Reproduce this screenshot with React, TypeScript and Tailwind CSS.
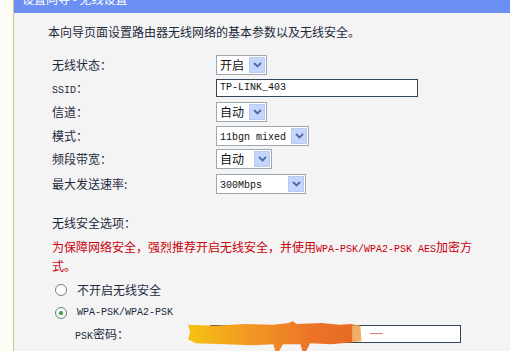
import React from 'react';

const cjk = { fontFamily: '"Noto Sans CJK SC", "Liberation Sans", sans-serif' };
const mono = 'font-["Liberation_Mono","Noto_Sans_CJK_SC",monospace] text-[10px] leading-none';

const Arrow = () => (
    <span className="ml-auto mr-[1px] flex h-[16px] w-[16px] items-center justify-center border border-[#b9c9ef] bg-[#c6d5fb]">
        <svg width="9" height="6" viewBox="0 0 9 6" fill="none">
            <path d="M1 1L4.5 4.5L8 1" stroke="#4b6ca8" strokeWidth="1.8" />
        </svg>
    </span>
);

const Select = ({ w, children }: { w: string; children: React.ReactNode }) => (
    <div className={`flex h-[20px] items-center border border-[#9ea6ae] bg-white pl-[3px] ${w}`}>
        <span className="text-[12px] leading-none text-[#111]">{children}</span>
        <Arrow />
    </div>
);

const Row = ({ label, h, children }: { label: React.ReactNode; h: string; children: React.ReactNode }) => (
    <div className={`flex items-center ${h}`}>
        <div className="w-[168px] pl-[4px] text-[12px] text-[#1c2a3c]">{label}</div>
        {children}
    </div>
);

export default function App() {
    return (
        <div className="flex h-[351px] w-[510px] overflow-hidden bg-[#fdfdf8]" style={cjk}>
            <div className="w-[13px] shrink-0" />
            <div className="relative flex flex-1 flex-col border-l border-[#d8bf8e] bg-[#f4f4f4]">
                <div className="h-[13px] shrink-0 overflow-hidden bg-[#6c8ff3] pl-[8px]">
                    <div className="-mt-[9px] text-[12px] leading-[16px] text-white">设置向导 - 无线设置</div>
                </div>

                <div className="pl-[34px]">
                    <div className="mt-[11px] h-[16px] text-[12px] leading-[16px] text-[#1c2a3c]">
                        本向导页面设置路由器无线网络的基本参数以及无线安全。
                    </div>

                    <div className="mt-[13px]">
                        <Row label="无线状态：" h="h-[23px]">
                            <Select w="w-[51px]">开启</Select>
                        </Row>
                        <Row label={<><span className={mono}>SSID</span>：</>} h="h-[24px]">
                            <div className="flex h-[18px] w-[202px] items-center border border-[#34475a] bg-white pl-[3px]">
                                <span className={`${mono} text-[#111]`}>TP-LINK_403</span>
                            </div>
                        </Row>
                        <Row label="信道：" h="h-[24px]">
                            <Select w="w-[51px]">自动</Select>
                        </Row>
                        <Row label="模式：" h="h-[23px]">
                            <Select w="w-[93px]">
                                <span className={mono}>11bgn mixed</span>
                            </Select>
                        </Row>
                        <Row label="频段带宽：" h="h-[24px]">
                            <Select w="w-[56px]">自动</Select>
                        </Row>
                        <Row label="最大发送速率:" h="h-[25px]">
                            <Select w="w-[90px]">
                                <span className={mono}>300Mbps</span>
                            </Select>
                        </Row>
                    </div>

                    <div className="mt-[17px] pl-[4px] text-[12px] leading-[19px] text-[#1c2a3c]">无线安全选项：</div>
                    <div className="mt-[5px] w-[440px] pl-[4px] text-[12px] leading-[19px] text-[#c8000a]">
                        为保障网络安全，强烈推荐开启无线安全，并使用<span className={mono}>WPA-PSK/WPA2-PSK AES</span>加密方式。
                    </div>

                    <div className="mt-[3px] flex h-[24px] items-center pl-[7px] text-[12px] text-[#1c2a3c]">
                        <span className="h-[12px] w-[12px] rounded-full border border-[#6f7f8e] bg-white" />
                        <span className="ml-[10px]">不开启无线安全</span>
                    </div>
                    <div className="flex h-[22px] items-center pl-[7px] text-[12px] text-[#1c2a3c]">
                        <span className="flex h-[12px] w-[12px] items-center justify-center rounded-full border border-[#6f7f8e] bg-[#f6f8f4]">
                            <span className="h-[4px] w-[4px] rounded-full bg-[#3d9b3a]" />
                        </span>
                        <span className={`ml-[10px] ${mono}`}>WPA-PSK/WPA2-PSK</span>
                    </div>
                    <div className="flex h-[20px] items-center text-[12px] text-[#1c2a3c]">
                        <div className="w-[162px] pl-[27px]">
                            <span className={mono}>PSK</span>密码：
                        </div>
                        <div className="h-[18px] w-[251px] border border-[#34475a] bg-white" />
                    </div>
                </div>

                <svg className="absolute left-[169px] top-[321px]" width="200" height="30" viewBox="0 0 200 31">
                    <defs>
                        <linearGradient id="paint" x1="0" x2="1" y1="0" y2="0">
                            <stop offset="0" stopColor="#f5c214" />
                            <stop offset="0.35" stopColor="#f29a22" />
                            <stop offset="0.75" stopColor="#ec7428" />
                            <stop offset="1" stopColor="#e66a24" />
                        </linearGradient>
                    </defs>
                    <path
                        d="M2 4 L30 5 L60 3 L90 4 L106 2 L110 0 L114 3 L140 2 L158 4 L172 3 L172 22 L150 24 L128 23 L124 31 L120 31 L118 24 L100 24 L96 31 L92 31 L90 24 L68 25 L40 24 L10 23 L2 19 L4 12 Z"
                        fill="url(#paint)"
                    />
                    <path d="M172 3 L180 5 L181 21 L172 22 Z" fill="#f1a04a" opacity="0.85" />
                    <line x1="190" y1="13" x2="203" y2="13" stroke="#d66f6f" strokeWidth="1" />
                </svg>
            </div>
        </div>
    );
}
